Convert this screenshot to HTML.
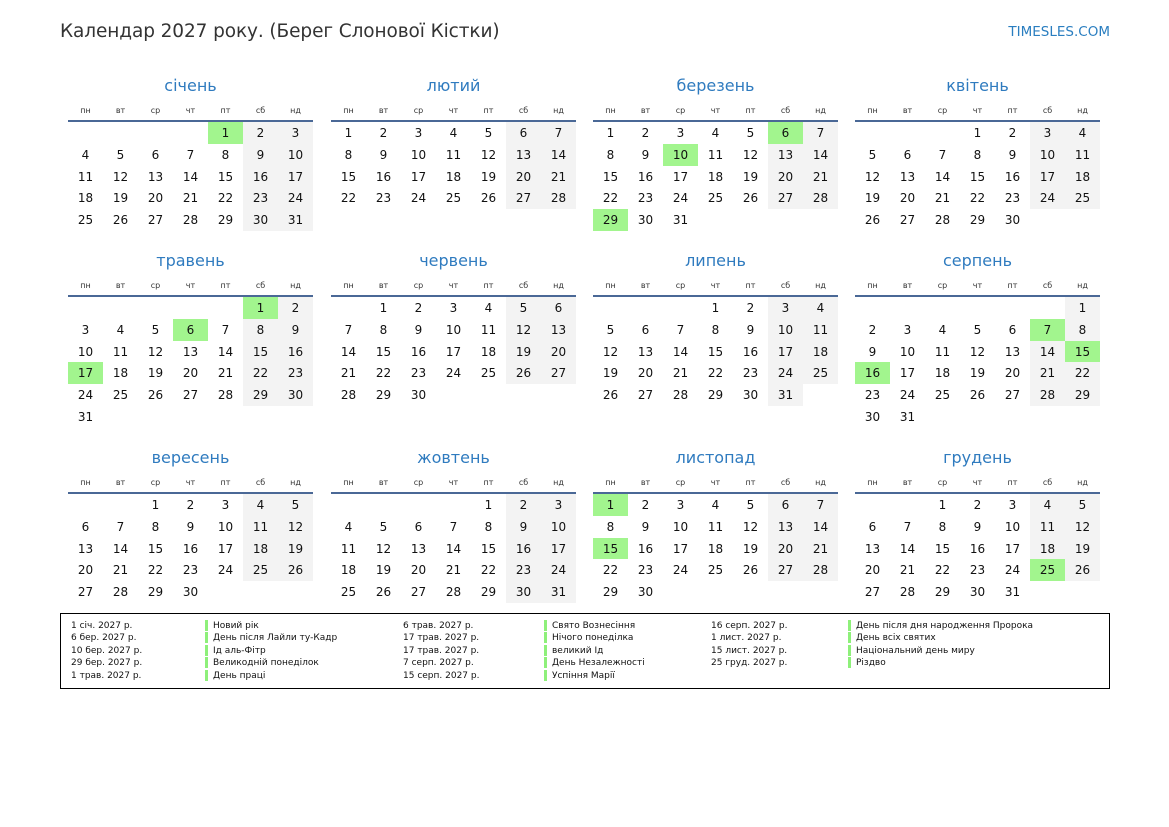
<!DOCTYPE html>
<html><head><meta charset="utf-8"><style>
body{margin:0;width:1169px;height:827px;background:#fff;font-family:"DejaVu Sans","Liberation Sans",sans-serif;color:#111;position:relative;overflow:hidden}
.h1{position:absolute;left:60px;top:21px;font-size:18.5px;color:#333;white-space:nowrap;letter-spacing:-0.1px}
.site{position:absolute;right:59px;top:24px;font-size:13.5px;color:#2a7ec0}
.m{position:absolute;width:245px;height:200px}
.t{position:absolute;left:0;top:0;width:245px;text-align:center;font-size:16px;line-height:16px;color:#2f7bbf}
.w{position:absolute;left:0;top:28px;width:245px;display:grid;grid-template-columns:repeat(7,35px);font-size:8px;line-height:10px;text-align:center;color:#333}
.ln{position:absolute;left:0;top:42px;width:245px;height:2px;background:#4a6896}
.d{position:absolute;left:0;top:44px;width:245px;display:grid;grid-template-columns:repeat(7,35px);grid-auto-rows:21.75px;font-size:12px;text-align:center;line-height:22.5px}
.d i,.d b,.d u{font-style:normal;font-weight:normal;text-decoration:none}
.d b{background:#f3f3f3}
.d u{background:#a2f58e}
.lg{position:absolute;left:60px;top:613px;width:1048px;height:74px;border:1px solid #000}
.c{position:absolute;top:6px;font-size:9px;line-height:12.4px;white-space:nowrap;color:#111}
.n span{display:block;border-left:3px solid #8ef07a;padding-left:5px;height:11px;line-height:12px;margin-bottom:1.4px}
</style></head><body>
<div class="h1">Календар 2027 року. (Берег Слонової Кістки)</div>
<div class="site">TIMESLES.COM</div>

<div class="m" style="left:68px;top:78px"><div class="t">січень</div><div class="w"><span>пн</span><span>вт</span><span>ср</span><span>чт</span><span>пт</span><span>сб</span><span>нд</span></div><div class="ln"></div>
<div class="d"><u style="grid-column-start:5">1</u><b>2</b><b>3</b><i>4</i><i>5</i><i>6</i><i>7</i><i>8</i><b>9</b><b>10</b><i>11</i><i>12</i><i>13</i><i>14</i><i>15</i><b>16</b><b>17</b><i>18</i><i>19</i><i>20</i><i>21</i><i>22</i><b>23</b><b>24</b><i>25</i><i>26</i><i>27</i><i>28</i><i>29</i><b>30</b><b>31</b></div></div>

<div class="m" style="left:331px;top:78px"><div class="t">лютий</div><div class="w"><span>пн</span><span>вт</span><span>ср</span><span>чт</span><span>пт</span><span>сб</span><span>нд</span></div><div class="ln"></div>
<div class="d"><i>1</i><i>2</i><i>3</i><i>4</i><i>5</i><b>6</b><b>7</b><i>8</i><i>9</i><i>10</i><i>11</i><i>12</i><b>13</b><b>14</b><i>15</i><i>16</i><i>17</i><i>18</i><i>19</i><b>20</b><b>21</b><i>22</i><i>23</i><i>24</i><i>25</i><i>26</i><b>27</b><b>28</b></div></div>

<div class="m" style="left:593px;top:78px"><div class="t">березень</div><div class="w"><span>пн</span><span>вт</span><span>ср</span><span>чт</span><span>пт</span><span>сб</span><span>нд</span></div><div class="ln"></div>
<div class="d"><i>1</i><i>2</i><i>3</i><i>4</i><i>5</i><u>6</u><b>7</b><i>8</i><i>9</i><u>10</u><i>11</i><i>12</i><b>13</b><b>14</b><i>15</i><i>16</i><i>17</i><i>18</i><i>19</i><b>20</b><b>21</b><i>22</i><i>23</i><i>24</i><i>25</i><i>26</i><b>27</b><b>28</b><u>29</u><i>30</i><i>31</i></div></div>

<div class="m" style="left:855px;top:78px"><div class="t">квітень</div><div class="w"><span>пн</span><span>вт</span><span>ср</span><span>чт</span><span>пт</span><span>сб</span><span>нд</span></div><div class="ln"></div>
<div class="d"><i style="grid-column-start:4">1</i><i>2</i><b>3</b><b>4</b><i>5</i><i>6</i><i>7</i><i>8</i><i>9</i><b>10</b><b>11</b><i>12</i><i>13</i><i>14</i><i>15</i><i>16</i><b>17</b><b>18</b><i>19</i><i>20</i><i>21</i><i>22</i><i>23</i><b>24</b><b>25</b><i>26</i><i>27</i><i>28</i><i>29</i><i>30</i></div></div>

<div class="m" style="left:68px;top:253px"><div class="t">травень</div><div class="w"><span>пн</span><span>вт</span><span>ср</span><span>чт</span><span>пт</span><span>сб</span><span>нд</span></div><div class="ln"></div>
<div class="d"><u style="grid-column-start:6">1</u><b>2</b><i>3</i><i>4</i><i>5</i><u>6</u><i>7</i><b>8</b><b>9</b><i>10</i><i>11</i><i>12</i><i>13</i><i>14</i><b>15</b><b>16</b><u>17</u><i>18</i><i>19</i><i>20</i><i>21</i><b>22</b><b>23</b><i>24</i><i>25</i><i>26</i><i>27</i><i>28</i><b>29</b><b>30</b><i>31</i></div></div>

<div class="m" style="left:331px;top:253px"><div class="t">червень</div><div class="w"><span>пн</span><span>вт</span><span>ср</span><span>чт</span><span>пт</span><span>сб</span><span>нд</span></div><div class="ln"></div>
<div class="d"><i style="grid-column-start:2">1</i><i>2</i><i>3</i><i>4</i><b>5</b><b>6</b><i>7</i><i>8</i><i>9</i><i>10</i><i>11</i><b>12</b><b>13</b><i>14</i><i>15</i><i>16</i><i>17</i><i>18</i><b>19</b><b>20</b><i>21</i><i>22</i><i>23</i><i>24</i><i>25</i><b>26</b><b>27</b><i>28</i><i>29</i><i>30</i></div></div>

<div class="m" style="left:593px;top:253px"><div class="t">липень</div><div class="w"><span>пн</span><span>вт</span><span>ср</span><span>чт</span><span>пт</span><span>сб</span><span>нд</span></div><div class="ln"></div>
<div class="d"><i style="grid-column-start:4">1</i><i>2</i><b>3</b><b>4</b><i>5</i><i>6</i><i>7</i><i>8</i><i>9</i><b>10</b><b>11</b><i>12</i><i>13</i><i>14</i><i>15</i><i>16</i><b>17</b><b>18</b><i>19</i><i>20</i><i>21</i><i>22</i><i>23</i><b>24</b><b>25</b><i>26</i><i>27</i><i>28</i><i>29</i><i>30</i><b>31</b></div></div>

<div class="m" style="left:855px;top:253px"><div class="t">серпень</div><div class="w"><span>пн</span><span>вт</span><span>ср</span><span>чт</span><span>пт</span><span>сб</span><span>нд</span></div><div class="ln"></div>
<div class="d"><b style="grid-column-start:7">1</b><i>2</i><i>3</i><i>4</i><i>5</i><i>6</i><u>7</u><b>8</b><i>9</i><i>10</i><i>11</i><i>12</i><i>13</i><b>14</b><u>15</u><u>16</u><i>17</i><i>18</i><i>19</i><i>20</i><b>21</b><b>22</b><i>23</i><i>24</i><i>25</i><i>26</i><i>27</i><b>28</b><b>29</b><i>30</i><i>31</i></div></div>

<div class="m" style="left:68px;top:450px"><div class="t">вересень</div><div class="w"><span>пн</span><span>вт</span><span>ср</span><span>чт</span><span>пт</span><span>сб</span><span>нд</span></div><div class="ln"></div>
<div class="d"><i style="grid-column-start:3">1</i><i>2</i><i>3</i><b>4</b><b>5</b><i>6</i><i>7</i><i>8</i><i>9</i><i>10</i><b>11</b><b>12</b><i>13</i><i>14</i><i>15</i><i>16</i><i>17</i><b>18</b><b>19</b><i>20</i><i>21</i><i>22</i><i>23</i><i>24</i><b>25</b><b>26</b><i>27</i><i>28</i><i>29</i><i>30</i></div></div>

<div class="m" style="left:331px;top:450px"><div class="t">жовтень</div><div class="w"><span>пн</span><span>вт</span><span>ср</span><span>чт</span><span>пт</span><span>сб</span><span>нд</span></div><div class="ln"></div>
<div class="d"><i style="grid-column-start:5">1</i><b>2</b><b>3</b><i>4</i><i>5</i><i>6</i><i>7</i><i>8</i><b>9</b><b>10</b><i>11</i><i>12</i><i>13</i><i>14</i><i>15</i><b>16</b><b>17</b><i>18</i><i>19</i><i>20</i><i>21</i><i>22</i><b>23</b><b>24</b><i>25</i><i>26</i><i>27</i><i>28</i><i>29</i><b>30</b><b>31</b></div></div>

<div class="m" style="left:593px;top:450px"><div class="t">листопад</div><div class="w"><span>пн</span><span>вт</span><span>ср</span><span>чт</span><span>пт</span><span>сб</span><span>нд</span></div><div class="ln"></div>
<div class="d"><u>1</u><i>2</i><i>3</i><i>4</i><i>5</i><b>6</b><b>7</b><i>8</i><i>9</i><i>10</i><i>11</i><i>12</i><b>13</b><b>14</b><u>15</u><i>16</i><i>17</i><i>18</i><i>19</i><b>20</b><b>21</b><i>22</i><i>23</i><i>24</i><i>25</i><i>26</i><b>27</b><b>28</b><i>29</i><i>30</i></div></div>

<div class="m" style="left:855px;top:450px"><div class="t">грудень</div><div class="w"><span>пн</span><span>вт</span><span>ср</span><span>чт</span><span>пт</span><span>сб</span><span>нд</span></div><div class="ln"></div>
<div class="d"><i style="grid-column-start:3">1</i><i>2</i><i>3</i><b>4</b><b>5</b><i>6</i><i>7</i><i>8</i><i>9</i><i>10</i><b>11</b><b>12</b><i>13</i><i>14</i><i>15</i><i>16</i><i>17</i><b>18</b><b>19</b><i>20</i><i>21</i><i>22</i><i>23</i><i>24</i><u>25</u><b>26</b><i>27</i><i>28</i><i>29</i><i>30</i><i>31</i></div></div>

<div class="lg">
<div class="c" style="left:10px">1 січ. 2027 р.<br>6 бер. 2027 р.<br>10 бер. 2027 р.<br>29 бер. 2027 р.<br>1 трав. 2027 р.</div>
<div class="c n" style="left:144px"><span>Новий рік</span><span>День після Лайли ту-Кадр</span><span>Ід аль-Фітр</span><span>Великодній понеділок</span><span>День праці</span></div>
<div class="c" style="left:342px">6 трав. 2027 р.<br>17 трав. 2027 р.<br>17 трав. 2027 р.<br>7 серп. 2027 р.<br>15 серп. 2027 р.</div>
<div class="c n" style="left:483px"><span>Свято Вознесіння</span><span>Нічого понеділка</span><span>великий Ід</span><span>День Незалежності</span><span>Успіння Марії</span></div>
<div class="c" style="left:650px">16 серп. 2027 р.<br>1 лист. 2027 р.<br>15 лист. 2027 р.<br>25 груд. 2027 р.</div>
<div class="c n" style="left:787px"><span>День після дня народження Пророка</span><span>День всіх святих</span><span>Національний день миру</span><span>Різдво</span></div>
</div>
</body></html>
